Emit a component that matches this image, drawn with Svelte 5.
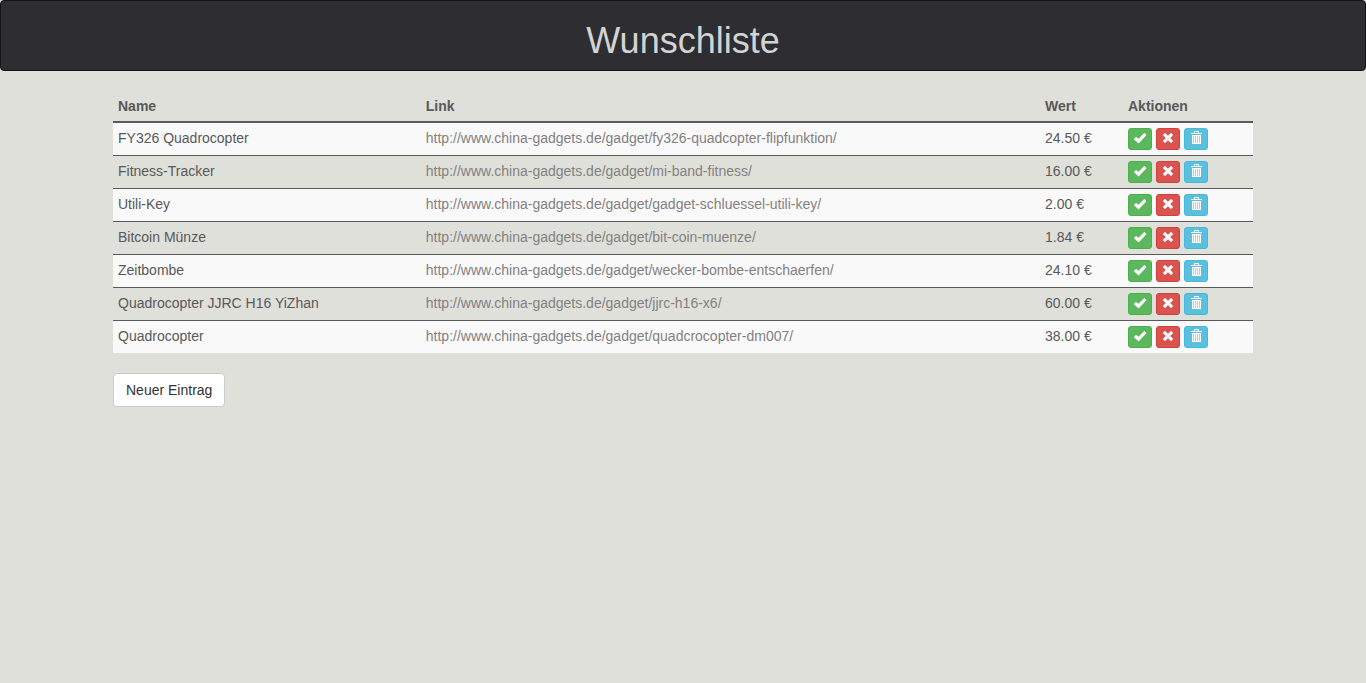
<script>
  const base = 'http://www.china-gadgets.de/gadget/';
  let entries = $state([
    { name: 'FY326 Quadrocopter', link: base + 'fy326-quadcopter-flipfunktion/', value: 24.5 },
    { name: 'Fitness-Tracker', link: base + 'mi-band-fitness/', value: 16 },
    { name: 'Utili-Key', link: base + 'gadget-schluessel-utili-key/', value: 2 },
    { name: 'Bitcoin Münze', link: base + 'bit-coin-muenze/', value: 1.84 },
    { name: 'Zeitbombe', link: base + 'wecker-bombe-entschaerfen/', value: 24.1 },
    { name: 'Quadrocopter JJRC H16 YiZhan', link: base + 'jjrc-h16-x6/', value: 60 },
    { name: 'Quadrocopter', link: base + 'quadcrocopter-dm007/', value: 38 }
  ]);

  function remove(entry) {
    entries = entries.filter((e) => e !== entry);
  }
</script>

<header class="navbar">
  <h1>Wunschliste</h1>
</header>

<main class="container">
  <table>
    <colgroup>
      <col class="col-name" />
      <col />
      <col class="col-value" />
      <col class="col-actions" />
    </colgroup>
    <thead>
      <tr>
        <th scope="col">Name</th>
        <th scope="col">Link</th>
        <th scope="col">Wert</th>
        <th scope="col">Aktionen</th>
      </tr>
    </thead>
    <tbody>
      {#each entries as entry (entry.link)}
        <tr>
          <td>{entry.name}</td>
          <td><a href={entry.link}>{entry.link}</a></td>
          <td>{entry.value.toFixed(2)} €</td>
          <td>
            <div class="actions">
              <button type="button" class="icon success" aria-label="Erledigt">
                <svg viewBox="0 0 14 14" aria-hidden="true">
                  <path d="M1.2 7.7 2.6 6.3Q3 5.9 3.5 6.2L5.5 7.7 11 2.3Q11.4 1.9 11.8 2.3L13.2 3.7Q13.6 4.1 13.2 4.5L6.1 12Q5.6 12.4 5.1 12L1.2 8.5Q.8 8.1 1.2 7.7Z" />
                </svg>
              </button>
              <button type="button" class="icon danger" aria-label="Ablehnen">
                <svg viewBox="0 0 14 14" aria-hidden="true">
                  <path d="M4.4 2.2 7 4.8 9.6 2.2Q10 1.9 10.4 2.2L11.8 3.6Q12.1 4 11.8 4.4L9.2 7 11.8 9.6Q12.1 10 11.8 10.4L10.4 11.8Q10 12.1 9.6 11.8L7 9.2 4.4 11.8Q4 12.1 3.6 11.8L2.2 10.4Q1.9 10 2.2 9.6L4.8 7 2.2 4.4Q1.9 4 2.2 3.6L3.6 2.2Q4 1.9 4.4 2.2Z" />
                </svg>
              </button>
              <button type="button" class="icon info" aria-label="Löschen" onclick={() => remove(entry)}>
                <svg viewBox="0 0 14 14" aria-hidden="true">
                  <path fill-rule="evenodd" d="M5 2V.9Q5 0 5.9 0H9.1Q10 0 10 .9V2H12.4Q13 2 13 2.6V3H2V2.6Q2 2 2.6 2ZM6 2H9V1H6ZM3 4H12V12.4Q12 13 11.4 13H3.6Q3 13 3 12.4ZM4.2 5V12H4.8V5ZM6.2 5V12H6.8V5ZM8.2 5V12H8.8V5ZM10.2 5V12H10.8V5Z" />
                </svg>
              </button>
            </div>
          </td>
        </tr>
      {/each}
    </tbody>
  </table>

  <button type="button" class="new-entry">Neuer Eintrag</button>
</main>

<style>
  :global(body) {
    background: #dfe0da;
    color: #5a5859;
    font: 14px/20px "Liberation Sans", Arial, sans-serif;
  }

  .navbar {
    box-sizing: border-box;
    padding: 20px 15px 10px;
    border: 1px solid #151515;
    border-radius: 4px;
    background: #2e2d32;
    text-align: center;
  }

  h1 {
    margin: 0;
    color: #d3d3d3;
    font-size: 36px;
    font-weight: 400;
    line-height: 39px;
  }

  .container {
    box-sizing: border-box;
    max-width: 1170px;
    margin: 20px auto;
    padding: 0 15px;
  }

  table {
    width: 100%;
    margin-bottom: 20px;
    border-spacing: 0;
    table-layout: fixed;
  }

  .col-name {
    width: 27%;
  }

  .col-value {
    width: 83px;
  }

  .col-actions {
    width: 130px;
  }

  th,
  td {
    padding: 5px;
    text-align: left;
    vertical-align: top;
  }

  th {
    border-bottom: 2px solid #5a5859;
  }

  tbody tr:nth-child(odd) {
    background: #f9f9f9;
  }

  tbody tr + tr td {
    border-top: 1px solid #5a5859;
  }

  a {
    color: #848081;
    text-decoration: none;
  }

  a:hover {
    text-decoration: underline;
  }

  button {
    box-sizing: border-box;
    border: 1px solid;
    font: inherit;
    cursor: pointer;
  }

  .actions {
    display: flex;
    gap: 4px;
  }

  .icon {
    display: flex;
    align-items: center;
    justify-content: center;
    width: 24px;
    height: 22px;
    padding: 0 0 2px;
    border-radius: 3px;
  }

  .icon svg {
    width: 14px;
    height: 14px;
    fill: #fff;
  }

  .success {
    background: #5cb85c;
    border-color: #4cae4c;
  }

  .danger {
    background: #d9534f;
    border-color: #d43f3a;
  }

  .info {
    background: #5bc0de;
    border-color: #46b8da;
  }

  .new-entry {
    padding: 6px 12px;
    border-color: #ccc;
    border-radius: 4px;
    background: #fff;
    color: #333;
  }
</style>
